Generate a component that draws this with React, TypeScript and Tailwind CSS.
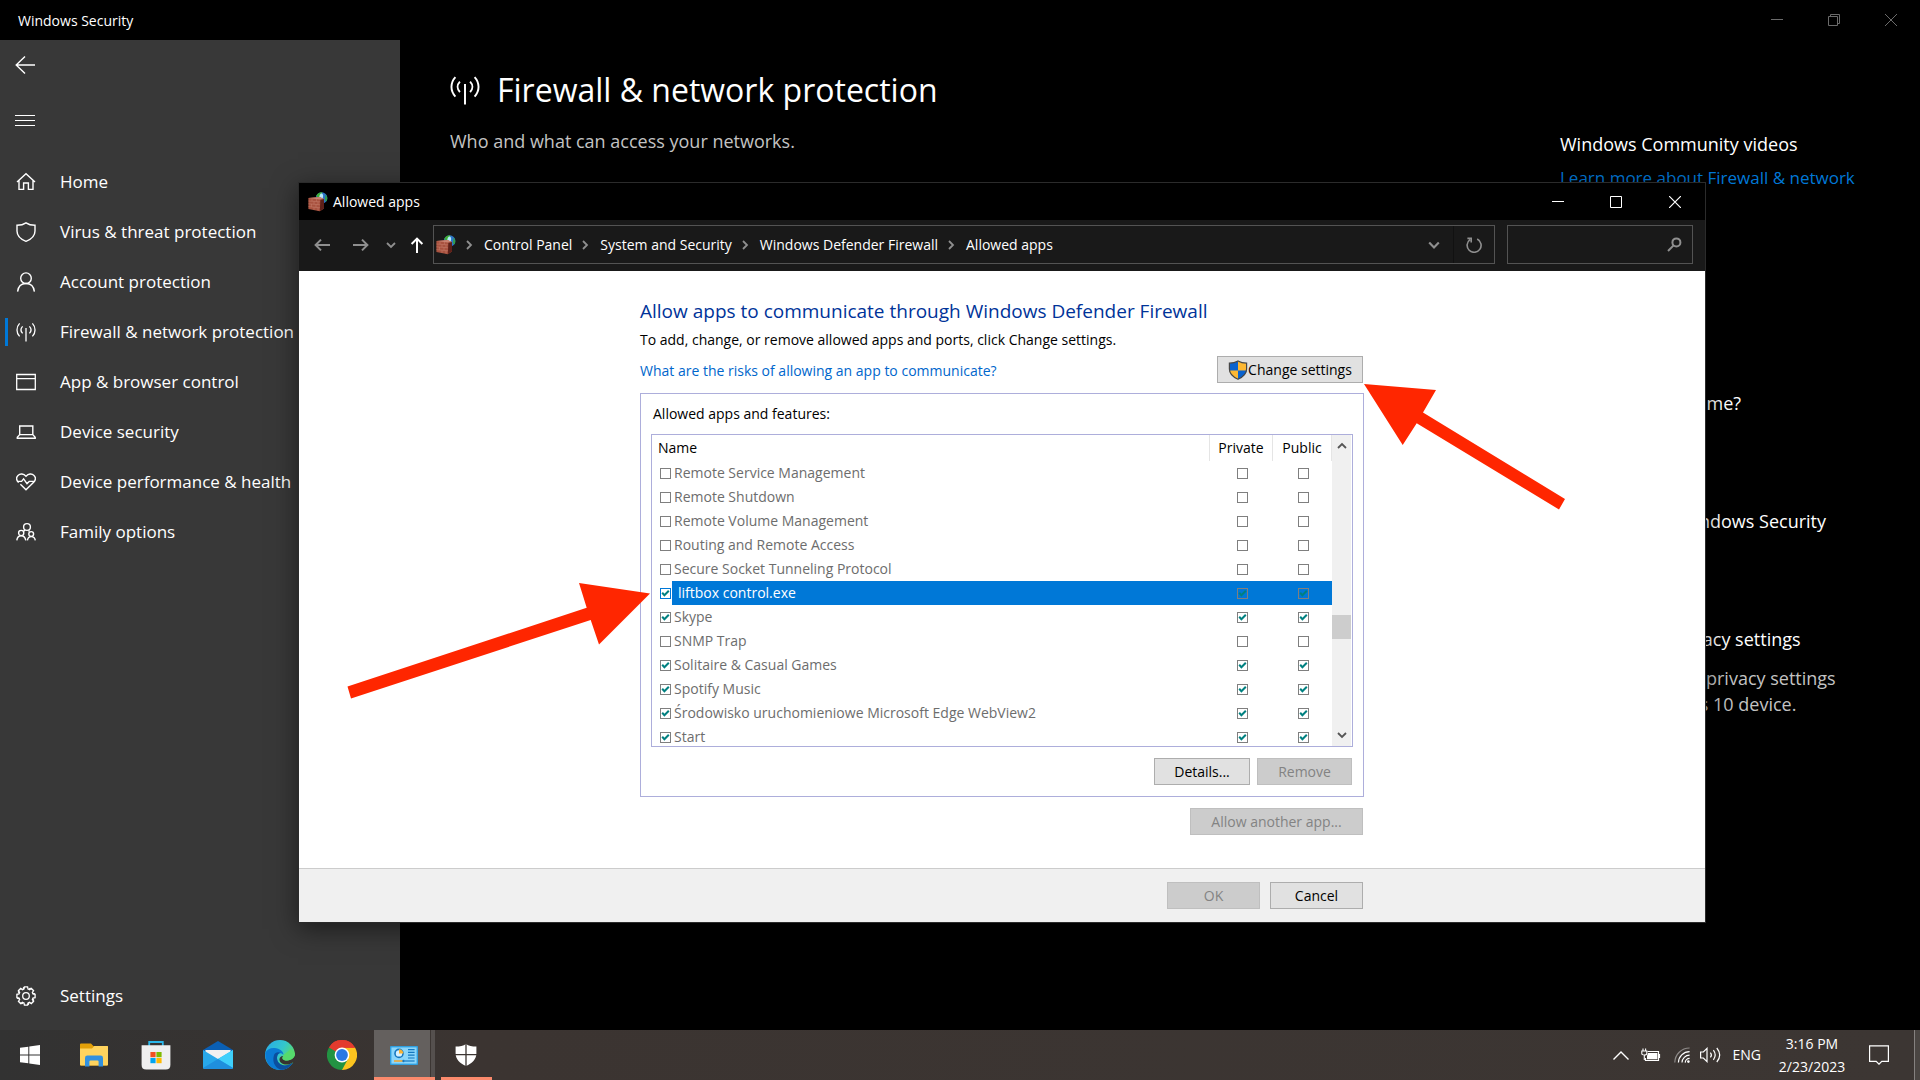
import type { ReactNode } from "react";
import clsx from "clsx";

interface IconProps {
  className?: string;
}

/* ---------- line icons ---------- */

function BackArrow({ className }: IconProps) {
  return (
    <svg className={className} viewBox="0 0 20 20" fill="none" stroke="currentColor" strokeWidth="1.4">
      <path d="M20 10H1M10 1.5L1.2 10L10 18.5" />
    </svg>
  );
}

function NavArrow({ className }: IconProps) {
  return (
    <svg className={className} viewBox="0 0 16 16" fill="none" stroke="currentColor" strokeWidth="2">
      <path d="M16 8H1.6M7 2.6L1.6 8L7 13.4" />
    </svg>
  );
}

function Chevron({ className }: IconProps) {
  return (
    <svg className={className} viewBox="0 0 10 10" fill="none" stroke="currentColor" strokeWidth="1.8">
      <path d="M1 3L5 7L9 3" />
    </svg>
  );
}

function HomeIcon() {
  return (
    <svg className="size-5" viewBox="0 0 20 20" fill="none" stroke="currentColor" strokeWidth="1.4">
      <path d="M1 10L10 1.8L19 10M3 8.6V17.4H7.6V11H12.4V17.4H17V8.6" />
    </svg>
  );
}

function ShieldIcon() {
  return (
    <svg className="size-5" viewBox="0 0 20 20" fill="none" stroke="currentColor" strokeWidth="1.4">
      <path d="M10 .9C7.6 2.6 4.6 3.3 1 3.3V9C1 13.8 4.5 17.2 10 19.3C15.5 17.2 19 13.8 19 9V3.3C15.4 3.3 12.4 2.6 10 .9Z" />
    </svg>
  );
}

function PersonIcon() {
  return (
    <svg className="size-5" viewBox="0 0 20 20" fill="none" stroke="currentColor" strokeWidth="1.4">
      <circle cx="10" cy="6.2" r="5.3" />
      <path d="M1.6 19.6C2.2 14.6 5.5 11.5 10 11.5S17.8 14.6 18.4 19.6" />
    </svg>
  );
}

function AntennaIcon({ className }: IconProps) {
  return (
    <svg className={className} viewBox="0 0 20 20" fill="none" stroke="currentColor" strokeWidth="1.3">
      <path d="M10 6V19.6M3.6 1.4C.1 5.2.1 10.6 3.6 14.4M16.4 1.4C19.9 5.2 19.9 10.6 16.4 14.4M6.6 4.4C4.6 6.5 4.6 9.3 6.6 11.4M13.4 4.4C15.4 6.5 15.4 9.3 13.4 11.4" />
    </svg>
  );
}

function BrowserIcon() {
  return (
    <svg className="size-5" viewBox="0 0 20 20" fill="none" stroke="currentColor" strokeWidth="1.3">
      <path d="M.7 2.5H19.3V17.5H.7ZM.7 6.6H19.3" />
    </svg>
  );
}

function LaptopIcon() {
  return (
    <svg className="size-5" viewBox="0 0 20 20" fill="none" stroke="currentColor" strokeWidth="1.4">
      <path d="M3.7 12.6V4H16.8V12.6M3.7 12.6H16.8L19.2 15.2V16.2H1.3V15.2Z" />
    </svg>
  );
}

function HeartIcon() {
  return (
    <svg className="size-5" viewBox="0 0 20 20" fill="none" stroke="currentColor" strokeWidth="1.4">
      <path d="M2.6 10.6C.2 8 .3 5.1 2 3.4C4.2 1.3 7.6 1.6 10 4.3C12.4 1.6 15.8 1.3 18 3.4C19.7 5.1 19.8 8 17.4 10.6L10 17.8L4.4 12.3" />
      <path d="M1.4 9.4H5.6L7.6 6.9L11 11.6L13.2 9.4H18.4" />
    </svg>
  );
}

function FamilyIcon() {
  return (
    <svg className="size-5" viewBox="0 0 20 20" fill="none" stroke="currentColor" strokeWidth="1.4">
      <circle cx="11" cy="5" r="3.4" />
      <circle cx="5.2" cy="11" r="2.6" />
      <circle cx="15.2" cy="12" r="2.4" />
      <path d="M.8 18.4C1.2 15.4 2.8 13.8 5.2 13.8S9.2 15.4 9.8 18.4M11.4 18.4C11.8 15.8 13.2 14.6 15.2 14.6S18.9 15.8 19.3 18.4M7.4 9.6L9 8M13.4 9.6L12.6 8.4" />
    </svg>
  );
}

function GearIcon() {
  const teeth = Array.from({ length: 8 }, (_, i) => i * 45);
  return (
    <svg className="size-5" viewBox="0 0 20 20" fill="none" stroke="currentColor" strokeWidth="1.3">
      <circle cx="10" cy="10" r="3.3" />
      {teeth.map((angle) => (
        <path
          key={angle}
          transform={`rotate(${angle} 10 10)`}
          d="M7.2 3.2L8 3L8.4 .9H11.6L12 3L12.9 3.3L14.6 2.1"
        />
      ))}
    </svg>
  );
}

/* ---------- coloured icons ---------- */

function FirewallIcon() {
  return (
    <svg className="size-5 shrink-0" viewBox="0 0 20 20">
      <circle cx="13.6" cy="6" r="5.8" fill="#2d74c9" />
      <path d="M8.2 4C9.4 1.2 12 .1 14.4 .4C13.8 2.4 12.6 3.6 11.6 6.4Z" fill="#3fae35" />
      <path d="M13 1.6C15.2 1.4 15.6 4 14.6 6.4L11.6 6.8C11 4.6 11.4 2.6 13 1.6Z" fill="#b5ecfa" />
      <path d="M17.6 2.6C19.6 4.6 19.8 7.4 18.4 9.4L16.8 8.2Z" fill="#2fa04b" />
      <path d="M.4 6L11.6 5L16 7V16.6L11.8 19.2L.4 17Z" fill="#a8523f" />
      <path d="M12.4 7.4L16 7V16.6L11.8 19.2Z" fill="#5d2019" />
      <path d="M.4 6L11.6 5L16 7L12 7.6Z" fill="#c98271" />
      <path
        d="M.4 9L12 9.8M.4 11.8L12 12.8M.4 14.6L12 15.8M4 6.8V9.2M8.4 7V9.4M6 9.4V12.2M10 9.8V12.6M3.4 12V14.8M8 12.4V15.4M6 15.2V17.8M10 15.6V18.6"
        stroke="#c98271"
        strokeWidth=".5"
        fill="none"
      />
    </svg>
  );
}

function UacShield() {
  return (
    <svg className="size-5 shrink-0" viewBox="0 0 20 20">
      <path d="M10 1C7.4 2.6 4.4 3.2 1.4 3.2V9C1.4 13.6 5 17 10 19.2Z" fill="#0b63ce" />
      <path d="M10 1C12.6 2.6 15.6 3.2 18.6 3.2V9C18.6 13.6 15 17 10 19.2Z" fill="#fdb833" />
      <path d="M1.4 10.4H10V19.2C5.4 17.2 2 14.2 1.4 10.4Z" fill="#fdb833" />
      <path d="M18.6 10.4H10V19.2C14.6 17.2 18 14.2 18.6 10.4Z" fill="#0b63ce" />
      <path
        d="M10 1C7.4 2.6 4.4 3.2 1.4 3.2V9C1.4 13.6 5 17 10 19.2C15 17 18.6 13.6 18.6 9V3.2C15.6 3.2 12.6 2.6 10 1Z"
        fill="none"
        stroke="#474747"
        strokeWidth="1.2"
      />
    </svg>
  );
}

function StartLogo() {
  return (
    <svg className="size-5" viewBox="0 0 20 20" fill="#fff">
      <path d="M0 2.8L8.3 1.7V9.5H0ZM9.3 1.5L20 0V9.5H9.3ZM0 10.5H8.3V18.3L0 17.2ZM9.3 10.5H20V20L9.3 18.5Z" />
    </svg>
  );
}

function ExplorerLogo() {
  return (
    <svg className="h-6 w-7" viewBox="0 0 28 24">
      <path d="M0 1.6Q0 .6 1 .6H11L13.4 3H28V21.4Q28 22.4 27 22.4H1Q0 22.4 0 21.4Z" fill="#e3a008" />
      <path d="M0 5.4H12L14.4 3H27Q28 3 28 4V21.4Q28 22.4 27 22.4H1Q0 22.4 0 21.4Z" fill="#ffd45e" />
      <path d="M5 23.4V15Q5 12.6 7.4 12.6H20.6Q23 12.6 23 15V23.4H18.6V18.6Q18.6 17.4 17.4 17.4H10.6Q9.4 17.4 9.4 18.6V23.4Z" fill="#3291df" />
    </svg>
  );
}

function StoreLogo() {
  return (
    <svg className="h-[30px] w-[30px]" viewBox="0 0 30 30">
      <path d="M8.2 6V2H21.8V6" fill="none" stroke="#2bb7ea" strokeWidth="1.8" />
      <path d="M.6 5.2H29.4V25Q29.4 29.6 24.8 29.6H5.2Q.6 29.6 .6 25Z" fill="#efefef" />
      <path d="M9.4 12H14.6V17.2H9.4Z" fill="#f25022" />
      <path d="M15.4 12H20.6V17.2H15.4Z" fill="#7fba00" />
      <path d="M9.4 18H14.6V23.2H9.4Z" fill="#00a4ef" />
      <path d="M15.4 18H20.6V23.2H15.4Z" fill="#ffb900" />
    </svg>
  );
}

function MailLogo() {
  return (
    <svg className="h-7 w-[30px]" viewBox="0 0 30 28">
      <path d="M0 9L15 0L30 9V14H0Z" fill="#0a5fb4" />
      <path d="M2.4 9H27.6V20H2.4Z" fill="#f1f1f1" />
      <path d="M0 9L15 18L30 9V26.4Q30 28 28.4 28H1.6Q0 28 0 26.4Z" fill="#28a8ea" />
      <path d="M15 18L30 9V27Z" fill="#3fd0fb" />
      <path d="M15 18L30 27Q29.6 28 28.4 28H1.6L0 27Z" fill="#1f8fdd" />
    </svg>
  );
}

function EdgeLogo() {
  return (
    <svg className="h-[30px] w-[30px]" viewBox="0 0 30 30">
      <defs>
        <linearGradient id="edge-top" x1="0" y1="0" x2="1" y2="0.6">
          <stop offset="0" stopColor="#27a9ea" />
          <stop offset="0.55" stopColor="#34c6cc" />
          <stop offset="1" stopColor="#66e050" />
        </linearGradient>
      </defs>
      <circle cx="15" cy="15" r="15" fill="url(#edge-top)" />
      <path d="M.2 13C2 9 6 7.6 9.6 8C14.6 8.4 18.6 11.2 18.4 15C16 11.6 12 13.4 12 18C12 23 17 26.6 22.6 25C24.6 24.4 26.4 23.4 27.8 22.4C25 27.4 20.4 30 15 30C7 30 0 24 .2 13Z" fill="#0b7bd4" />
      <path d="M9 15C6.4 23 11.6 29.6 17.4 29.8C22 29.2 25.8 26.4 27.8 22.4C26.4 23.4 24.6 24.4 22.6 25C17 26.6 12 23 12 18C12 15 13.6 12.8 15.6 12.8C12.8 11.4 10.2 12.2 9 15Z" fill="#0b4f9e" />
      <path d="M18 16C17.2 18 17.6 20 21 20.4C25.4 20.8 29 18.4 30 15V22L27.8 22.4C25 24.4 20 25.6 16.4 23C13.4 21 13.8 16.4 18 16Z" fill="#373331" />
      <path d="M18.4 15C18.4 16.8 16.8 17.4 17.4 18.8C18.2 20.4 21 21 24 20.2C27.6 19.4 30 16.6 30 13.6L26 9Z" fill="#56da6c" />
    </svg>
  );
}

function ChromeLogo() {
  return (
    <svg className="h-[30px] w-[30px]" viewBox="0 0 30 30">
      <path d="M15 15L2 7.5A15 15 0 0 1 28 7.5Z" fill="#e33b2e" />
      <path d="M15 15L28 7.5A15 15 0 0 1 15 30Z" fill="#fcc41f" />
      <path d="M15 15L15 30A15 15 0 0 1 2 7.5Z" fill="#229342" />
      <path d="M15 7.8H28.1L21.2 18.6Z" fill="#fcc41f" />
      <path d="M21.2 18.6L15 30L10 20Z" fill="#229342" />
      <path d="M8.8 18.6L2 7.5L15 7.8Z" fill="#229342" />
      <path d="M2 7.5L8.8 11.4L15 7.8H28.1A15 15 0 0 0 2 7.5Z" fill="#e33b2e" />
      <circle cx="15" cy="15" r="7.4" fill="#fff" />
      <circle cx="15" cy="15" r="5.9" fill="#2a78e4" />
    </svg>
  );
}

function ControlPanelLogo() {
  return (
    <svg className="h-[19px] w-[28px]" viewBox="0 0 28 19">
      <rect width="28" height="19" rx="1" fill="#2f9fe0" />
      <rect x="1.4" y="1.4" width="25.2" height="16.2" fill="#8bd6fb" />
      <circle cx="9" cy="7.4" r="4.8" fill="#1577c0" />
      <circle cx="9" cy="7.4" r="3.2" fill="#d6f1ff" />
      <path d="M9 7.4V3.2A4.6 4.6 0 0 1 13.4 7.4Z" fill="#f9b233" />
      <path d="M18 3.6H24.6M18 6.4H24.6M18 9.2H24.6M18 12H24.6" stroke="#1577c0" strokeWidth="1.2" />
      <path d="M4 15H13" stroke="#f9a01b" strokeWidth="1.4" />
      <path d="M15 15H24.6" stroke="#1577c0" strokeWidth="1.2" />
      <circle cx="13.6" cy="15" r="1.3" fill="#1577c0" />
    </svg>
  );
}

function DefenderLogo() {
  return (
    <svg className="h-[22px] w-[22px]" viewBox="0 0 22 22">
      <path d="M11 0C8.4 1.8 5 2.6 .6 2.6V9.6C.6 15.4 5 19.6 11 22C17 19.6 21.4 15.4 21.4 9.6V2.6C17 2.6 13.6 1.8 11 0Z" fill="#fff" />
      <path d="M11 0V22M0 10.6H22" stroke="#3c3633" strokeWidth="1.3" />
    </svg>
  );
}

/* ---------- Windows Security window ---------- */

const NAV_ITEMS: { label: string; icon: ReactNode; active?: boolean }[] = [
  { label: "Home", icon: <HomeIcon /> },
  { label: "Virus & threat protection", icon: <ShieldIcon /> },
  { label: "Account protection", icon: <PersonIcon /> },
  { label: "Firewall & network protection", icon: <AntennaIcon className="size-5" />, active: true },
  { label: "App & browser control", icon: <BrowserIcon /> },
  { label: "Device security", icon: <LaptopIcon /> },
  { label: "Device performance & health", icon: <HeartIcon /> },
  { label: "Family options", icon: <FamilyIcon /> },
];

function NavItem({ label, icon, active }: { label: string; icon: ReactNode; active?: boolean }) {
  return (
    <a href="#" className="flex h-[50px] items-center text-[17px] whitespace-nowrap" aria-current={active ? "page" : undefined}>
      <span className={clsx("mr-2 ml-[5px] h-7 w-[3px]", active && "bg-[#0078d7]")} />
      <span className="mr-6">{icon}</span>
      {label}
    </a>
  );
}

function MainTitleBar() {
  return (
    <header className="flex h-10 shrink-0 items-center justify-between pr-px pl-[18px]">
      <span className="pt-px text-sm">Windows Security</span>
      <div className="flex text-[#6b6b6b]">
        <button aria-label="Minimize" className="flex h-10 w-[57px] items-center justify-center">
          <svg className="size-3" viewBox="0 0 12 12" stroke="currentColor"><path d="M0 5.5H12" /></svg>
        </button>
        <button aria-label="Restore" className="flex h-10 w-[57px] items-center justify-center">
          <svg className="size-3" viewBox="0 0 12 12" fill="none" stroke="currentColor"><path d="M.5 2.5H9.5V11.5H.5ZM2.5 2.5V.5H11.5V9.5H9.5" /></svg>
        </button>
        <button aria-label="Close" className="flex h-10 w-[57px] items-center justify-center">
          <svg className="size-3" viewBox="0 0 12 12" stroke="currentColor"><path d="M0 0L12 12M12 0L0 12" /></svg>
        </button>
      </div>
    </header>
  );
}

function Sidebar() {
  return (
    <nav className="flex w-[400px] shrink-0 flex-col bg-[#383838]">
      <button aria-label="Back" className="flex h-[50px] w-[50px] items-center justify-center">
        <BackArrow className="size-5" />
      </button>
      <button aria-label="Menu" className="mt-[5px] flex h-[50px] w-[50px] flex-col items-center justify-center gap-1">
        <span className="h-px w-5 bg-white" />
        <span className="h-px w-5 bg-white" />
        <span className="h-px w-5 bg-white" />
      </button>
      <div className="mt-3 flex-1">
        {NAV_ITEMS.map((item) => (
          <NavItem key={item.label} {...item} />
        ))}
      </div>
      <div className="pb-[9px]">
        <NavItem label="Settings" icon={<GearIcon />} />
      </div>
    </nav>
  );
}

function MainContent() {
  return (
    <main className="flex flex-1 justify-between pl-[50px]">
      <div className="pt-6">
        <h1 className="flex items-center gap-[17px] text-[32px] leading-[52px]">
          <AntennaIcon className="size-[30px]" />
          Firewall &amp; network protection
        </h1>
        <p className="mt-[13px] text-lg leading-6 text-[#c3c3c3]">Who and what can access your networks.</p>
      </div>
      <aside className="w-[360px] pt-[92px] text-lg leading-6">
        <h2>Windows Community videos</h2>
        <a href="#" className="mt-2.5 block text-[17px] text-[#0078d7]">Learn more about Firewall &amp; network</a>
        <h2 className="mt-[201px]">Who's protecting me?</h2>
        <h2 className="mt-[94px]">Help improve Windows Security</h2>
        <h2 className="mt-[94px]">Change your privacy settings</h2>
        <p className="mt-3.5 leading-[26px] text-[#c3c3c3]">
          View and change privacy settings
          <br />
          for your Windows 10 device.
        </p>
      </aside>
    </main>
  );
}

/* ---------- Allowed apps dialog ---------- */

const CRUMBS = ["Control Panel", "System and Security", "Windows Defender Firewall", "Allowed apps"];

const APPS: { name: string; on: boolean; selected?: boolean }[] = [
  { name: "Remote Service Management", on: false },
  { name: "Remote Shutdown", on: false },
  { name: "Remote Volume Management", on: false },
  { name: "Routing and Remote Access", on: false },
  { name: "Secure Socket Tunneling Protocol", on: false },
  { name: "liftbox control.exe", on: true, selected: true },
  { name: "Skype", on: true },
  { name: "SNMP Trap", on: false },
  { name: "Solitaire & Casual Games", on: true },
  { name: "Spotify Music", on: true },
  { name: "Środowisko uruchomieniowe Microsoft Edge WebView2", on: true },
  { name: "Start", on: true },
];

function CheckBox({ id, label, checked, className }: { id?: string; label?: string; checked: boolean; className?: string }) {
  return (
    <span className="relative block size-[11px] shrink-0">
      <input
        id={id}
        type="checkbox"
        aria-label={label}
        defaultChecked={checked}
        className={clsx("peer block size-[11px] appearance-none border", className ?? "border-[#7f7f7f] bg-white")}
      />
      <svg
        className="pointer-events-none absolute inset-0 hidden size-[11px] text-[#008080] peer-checked:block"
        viewBox="0 0 11 11"
        fill="none"
        stroke="currentColor"
        strokeWidth="2"
      >
        <path d="M2.2 4.8L4.4 7.2L8.8 2.8" />
      </svg>
    </span>
  );
}

function DialogButton({ children, disabled, className }: { children: ReactNode; disabled?: boolean; className?: string }) {
  return (
    <button
      disabled={disabled}
      className={clsx(
        "flex h-[27px] items-center justify-center border whitespace-nowrap",
        disabled ? "border-[#bfbfbf] bg-[#cccccc] text-[#838383]" : "border-[#adadad] bg-[#e1e1e1] text-black",
        className,
      )}
    >
      {children}
    </button>
  );
}

function AddressBar() {
  return (
    <div className="flex h-[51px] items-center bg-[#191919] pr-3 pb-0.5 pl-[15px] text-[#8f8f8f]">
      <button aria-label="Back"><NavArrow className="size-4" /></button>
      <button aria-label="Forward" className="ml-[23px]"><NavArrow className="size-4 rotate-180" /></button>
      <button aria-label="Recent locations" className="ml-[17px]"><Chevron className="size-2.5" /></button>
      <button aria-label="Up" className="mr-2 ml-[13px] text-white"><NavArrow className="size-4 rotate-90" /></button>
      <div className="flex h-[39px] flex-1 items-center border border-[#535353]">
        <span className="pr-2 pl-0.5"><FirewallIcon /></span>
        {CRUMBS.map((crumb) => (
          <span key={crumb} className="flex items-center">
            <Chevron className="size-2.5 -rotate-90" />
            <a href="#" className="pr-2 pl-2.5 text-white">{crumb}</a>
          </span>
        ))}
        <button aria-label="Previous locations" className="ml-auto flex h-full w-10 items-center justify-center border-r border-[#111]">
          <Chevron className="size-3" />
        </button>
        <button aria-label="Refresh" className="flex h-full w-10 items-center justify-center">
          <svg className="size-4" viewBox="0 0 16 16" fill="none" stroke="currentColor" strokeWidth="1.6">
            <path d="M11.2 2A7 7 0 1 1 4 2.6M1.4 1.4H5.2V5.4" />
          </svg>
        </button>
      </div>
      <label className="ml-3 flex h-[39px] w-[186px] items-center border border-[#535353] pr-2.5">
        <input type="text" aria-label="Search Control Panel" className="min-w-0 flex-1 bg-transparent outline-none" />
        <svg className="size-[15px]" viewBox="0 0 15 15" fill="none" stroke="currentColor" strokeWidth="2">
          <circle cx="9.4" cy="5.4" r="4" />
          <path d="M6.6 8.4L1 14" />
        </svg>
      </label>
    </div>
  );
}

function AppsTable() {
  return (
    <div className="flex h-[313px] overflow-hidden border border-[#adaedb]">
      <div className="min-w-0 flex-1 overflow-hidden">
        <table className="w-full table-fixed border-separate border-spacing-0 text-left">
          <thead>
            <tr className="h-[26px]">
              <th className="border-r border-[#e5e5e5] p-0 pl-1.5 font-normal">Name</th>
              <th className="w-[63px] border-r border-[#e5e5e5] p-0 text-center font-normal">Private</th>
              <th className="w-[59px] border-r border-[#e5e5e5] p-0 text-center font-normal">Public</th>
            </tr>
          </thead>
          <tbody className="text-[#6d6d6d]">
            {APPS.map(({ name, on, selected }, i) => {
              const box = selected ? "border-[#7f7f7f] bg-[#0078d7]" : undefined;
              return (
                <tr key={name} className="h-6">
                  <td className="p-0">
                    <div className="flex h-6 items-center pl-2">
                      <CheckBox id={`app-${i}`} checked={on} className={selected ? "border-[#0078d7] bg-white" : undefined} />
                      <label
                        htmlFor={`app-${i}`}
                        className={clsx(
                          "flex h-6 flex-1 items-center whitespace-nowrap",
                          selected ? "ml-px bg-[#0078d7] pl-1.5 text-white" : "pl-[3px]",
                        )}
                      >
                        {name}
                      </label>
                    </div>
                  </td>
                  <td className={clsx("p-0 pl-[27px]", selected && "bg-[#0078d7]")}>
                    <CheckBox label={`${name}, private`} checked={on} className={box} />
                  </td>
                  <td className={clsx("p-0 pl-[25px]", selected && "bg-[#0078d7]")}>
                    <CheckBox label={`${name}, public`} checked={on} className={box} />
                  </td>
                </tr>
              );
            })}
          </tbody>
        </table>
      </div>
      <div className="mr-px flex w-[19px] flex-col items-center bg-[#f0f0f0] text-[#555]">
        <button aria-label="Scroll up" className="flex h-[22px] w-full items-center justify-center">
          <Chevron className="size-2.5 rotate-180" />
        </button>
        <div className="mt-[158px] h-6 w-full bg-[#cdcdcd]" />
        <button aria-label="Scroll down" className="mt-auto flex h-[22px] w-full items-center justify-center">
          <Chevron className="size-2.5" />
        </button>
      </div>
    </div>
  );
}

function AllowedAppsDialog() {
  return (
    <section
      role="dialog"
      aria-label="Allowed apps"
      className="absolute top-[182px] left-[298px] w-[1408px] border border-[#2b2b2b] bg-white text-sm text-black shadow-[0_6px_24px_rgba(0,0,0,0.5)]"
    >
      <header className="flex h-[37px] items-center bg-black pl-[9px] text-white">
        <FirewallIcon />
        <span className="ml-[5px] flex-1">Allowed apps</span>
        <button aria-label="Minimize" className="flex h-full w-[58px] items-center justify-center">
          <svg className="size-3" viewBox="0 0 12 12" stroke="currentColor"><path d="M0 5.5H12" /></svg>
        </button>
        <button aria-label="Maximize" className="flex h-full w-[58px] items-center justify-center">
          <svg className="size-3" viewBox="0 0 12 12" fill="none" stroke="currentColor"><path d="M.5 .5H11.5V11.5H.5Z" /></svg>
        </button>
        <button aria-label="Close" className="flex h-full w-[60px] items-center justify-center">
          <svg className="size-3" viewBox="0 0 12 12" stroke="currentColor" strokeWidth="1.2"><path d="M0 0L12 12M12 0L0 12" /></svg>
        </button>
      </header>
      <AddressBar />

      <div className="mx-auto w-[724px] pt-7">
        <h2 className="text-[19px] leading-6 text-[#003399]">
          Allow apps to communicate through Windows Defender Firewall
        </h2>
        <p className="mt-[5px] leading-6">To add, change, or remove allowed apps and ports, click Change settings.</p>
        <div className="mt-1 flex items-start justify-between pr-px">
          <a href="#" className="mt-[3px] leading-6 text-[#0066cc]">What are the risks of allowing an app to communicate?</a>
          <DialogButton className="w-[146px]">
            <UacShield />
            Change settings
          </DialogButton>
        </div>

        <div className="mt-2.5 border border-[#adaedb] px-2.5 pb-[11px]">
          <p className="my-2.5 pl-0.5 leading-5">Allowed apps and features:</p>
          <AppsTable />
          <div className="mt-[11px] flex justify-end gap-[7px] pr-px">
            <DialogButton className="w-24">Details...</DialogButton>
            <DialogButton disabled className="w-[95px]">Remove</DialogButton>
          </div>
        </div>
        <div className="mt-[11px] mb-[33px] flex justify-end pr-px">
          <DialogButton disabled className="w-[173px]">Allow another app...</DialogButton>
        </div>
      </div>

      <footer className="border-t border-[#cccccc] bg-[#f0f0f0] py-[13px]">
        <div className="mx-auto flex w-[724px] justify-end gap-2.5 pr-px">
          <DialogButton disabled className="w-[93px]">OK</DialogButton>
          <DialogButton className="w-[93px]">Cancel</DialogButton>
        </div>
      </footer>

      {/* pointers drawn over the dialog */}
      <svg className="pointer-events-none absolute top-[400px] left-[48px] h-[116px] w-[303px]" viewBox="0 0 303 116" fill="#ff2600">
        <path d="M303 10.5L232 0L239.7 24.7L.5 103.5L4 115.5L243.7 37L252 61.5Z" />
      </svg>
      <svg className="pointer-events-none absolute top-[201px] left-[1065px] h-[126px] w-[201px]" viewBox="0 0 201 126" fill="#ff2600">
        <path d="M0 0L72 6L59 28.5L201 115L195 125.5L52.7 39.3L38.7 61Z" />
      </svg>
    </section>
  );
}

/* ---------- taskbar ---------- */

const PINNED: { label: string; logo: ReactNode }[] = [
  { label: "File Explorer", logo: <ExplorerLogo /> },
  { label: "Microsoft Store", logo: <StoreLogo /> },
  { label: "Mail", logo: <MailLogo /> },
  { label: "Microsoft Edge", logo: <EdgeLogo /> },
  { label: "Google Chrome", logo: <ChromeLogo /> },
];

function Taskbar() {
  return (
    <footer className="flex h-[50px] shrink-0 items-center bg-linear-to-r from-[#323232] via-[#3b3431] via-25% to-[#3c3633]">
      <button aria-label="Start" className="flex h-full w-[60px] items-center justify-center">
        <StartLogo />
      </button>
      <div className="ml-[3px] flex h-full">
        {PINNED.map(({ label, logo }) => (
          <button key={label} aria-label={label} className="flex h-full w-[62px] items-center justify-center">
            {logo}
          </button>
        ))}
      </div>
      <button aria-label="Control Panel" className="ml-px flex h-full w-[61px] border-b-[3px] border-[#fb8a6c]">
        <span className="flex h-full w-14 items-center justify-center bg-[#64605e] pl-1 pt-1">
          <ControlPanelLogo />
        </span>
        <span className="h-full w-[5px] border-l border-[#3c3633] bg-[#55504e]" />
      </button>
      <button aria-label="Windows Security" className="ml-1.5 flex h-full w-[51px] items-center justify-center border-b-[3px] border-[#fb8a6c] pt-[3px] pr-px">
        <DefenderLogo />
      </button>

      <div className="ml-auto flex h-full items-center">
        <button aria-label="Show hidden icons">
          <svg className="h-[9px] w-4" viewBox="0 0 16 9" fill="none" stroke="#fff" strokeWidth="1.4"><path d="M.5 8.4L8 1L15.5 8.4" /></svg>
        </button>
        <svg className="ml-3 h-[14px] w-5" viewBox="0 0 20 14" fill="none" stroke="#fff">
          <path d="M4.5 10V12.5H17.5V3.5H6.5M18.5 6V10" strokeWidth="1.2" />
          <path d="M7 5H16.4V11.2H6V8Z" fill="#fff" stroke="none" />
          <path d="M.8 3H5.8V5.4Q5.8 7 3.3 7T.8 5.4ZM2 3V.4M4.6 3V.4M3.3 7V12" strokeWidth="1.1" />
        </svg>
        <svg className="ml-[13px] size-4" viewBox="0 0 16 16" fill="none" stroke="#fff" strokeWidth="1.2">
          <path d="M.8 15.6A14.8 14.8 0 0 1 15.6 1" stroke="#8f8b89" />
          <path d="M4.4 15.6A11.2 11.2 0 0 1 15.6 4.6M8 15.6A7.6 7.6 0 0 1 15.6 8.2M11.2 15.6A4.4 4.4 0 0 1 15.6 11.4" />
          <circle cx="14.4" cy="14.6" r="1.3" fill="#fff" stroke="none" />
        </svg>
        <svg className="ml-2.5 h-4 w-[21px]" viewBox="0 0 21 16" fill="none" stroke="#fff" strokeWidth="1.2">
          <path d="M.6 5H3.4L7 1.4V14.6L3.4 11H.6Z" />
          <path d="M10.4 5.6Q12.4 8 10.4 10.4M13.4 3.2Q17 8 13.4 12.8" />
          <path d="M16.8 1Q22.6 8 16.8 15" />
        </svg>
        <span className="ml-3 text-sm">ENG</span>
        <div className="ml-[13px] w-[76px] text-center text-sm leading-[23px]">
          <div>3:16 PM</div>
          <div>2/23/2023</div>
        </div>
        <button aria-label="Notifications" className="ml-[19px]">
          <svg className="size-5" viewBox="0 0 20 20" fill="none" stroke="#fff" strokeWidth="1.2">
            <path d="M.6 .8H19.4V16.4H12.8L10 19.2L7.2 16.4H.6Z" />
          </svg>
        </button>
        <span className="ml-[25px] h-[50px] w-1.5 border-l border-[#85817f] bg-[#4a4542]" />
      </div>
    </footer>
  );
}

export default function App() {
  return (
    <div className="relative flex h-screen flex-col overflow-hidden bg-black font-['Open_Sans','Noto_Sans',sans-serif] text-white">
      <MainTitleBar />
      <div className="flex min-h-0 flex-1">
        <Sidebar />
        <MainContent />
      </div>
      <Taskbar />
      <AllowedAppsDialog />
    </div>
  );
}
